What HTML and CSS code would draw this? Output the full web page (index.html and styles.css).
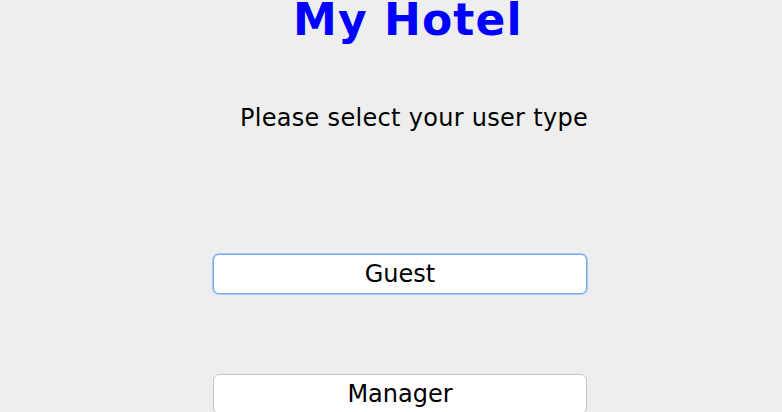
FILE: index.html
```html
<!DOCTYPE html>
<html>
<head>
<meta charset="utf-8">
<link rel="stylesheet" href="styles.css">
</head>
<body>
<div class="app">
  <h1 class="title">My Hotel</h1>
  <p class="subtitle">Please select your user type</p>
  <button class="btn btn-focus">Guest</button>
  <button class="btn">Manager</button>
</div>
</body>
</html>
```
FILE: styles.css
```css
html, body {
  margin: 0;
  padding: 0;
  background: #eeeeee;
  overflow: hidden;
}
.app {
  width: 782px;
  height: 412px;
  display: flex;
  flex-direction: column;
  align-items: flex-start;
  font-family: "DejaVu Sans", "Liberation Sans", sans-serif;
  color: #000;
}
.title {
  margin: 0 0 0 293px;
  font-size: 44px;
  line-height: 40px;
  font-weight: bold;
  letter-spacing: 1.1px;
  color: #0000ff;
  white-space: nowrap;
}
.subtitle {
  margin: 66px 0 0 240px;
  font-size: 24px;
  line-height: 24px;
  letter-spacing: 0.3px;
  white-space: nowrap;
}
.btn {
  box-sizing: border-box;
  width: 374px;
  height: 40px;
  margin: 0 0 0 213px;
  padding: 1px 0 0 0;
  background: #ffffff;
  border: 1px solid #c6c6c6;
  border-radius: 6px;
  font-family: "DejaVu Sans", "Liberation Sans", sans-serif;
  font-size: 24px;
  line-height: 37px;
  color: #000;
  text-align: center;
}
.btn-focus {
  margin-top: 124px;
  border-color: #79abe6;
  box-shadow: 0 0 0 1px #a4c8f0;
}
.btn + .btn {
  margin-top: 80px;
}
```
